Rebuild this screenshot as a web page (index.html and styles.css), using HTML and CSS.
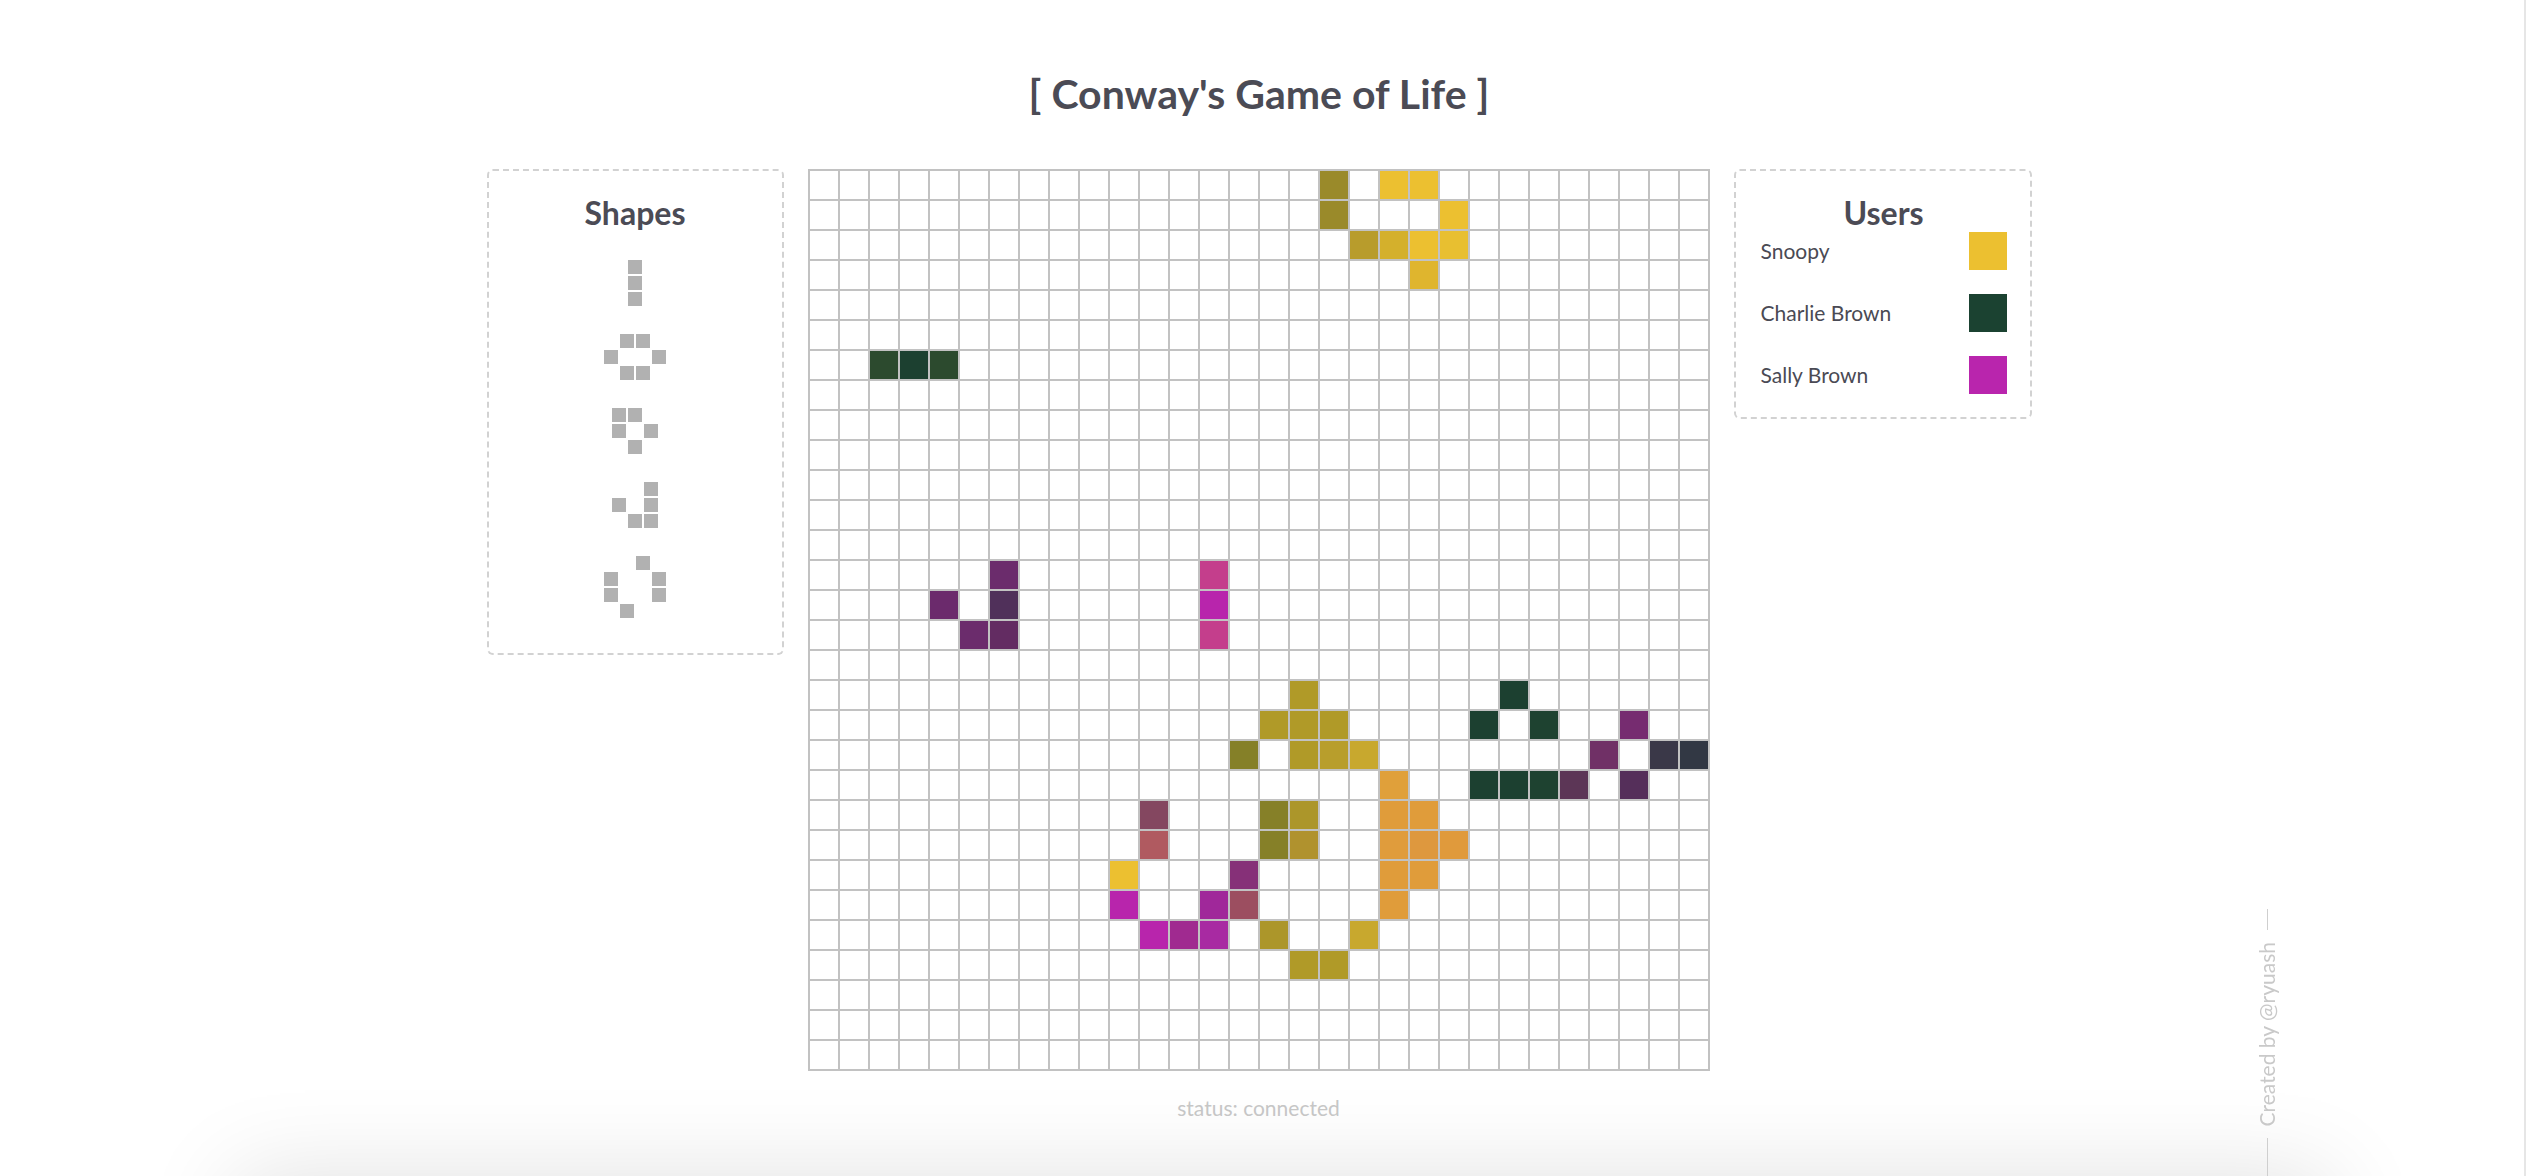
FILE: index.html
```html
<!DOCTYPE html>
<html lang="en">
<head>
<meta charset="utf-8">
<title>Conway's Game of Life</title>
<link rel="stylesheet" href="styles.css">
</head>
<body>
<main class="page">
  <h1 class="title">[ Conway's Game of Life ]</h1>
  <div class="layout">
    <aside class="panel shapes-panel">
      <h2 class="panel-title">Shapes</h2>
      <div class="shape-list">
        <div class="shape shape-1x3">
          <span class="sq" style="--r:1;--c:1"></span>
          <span class="sq" style="--r:2;--c:1"></span>
          <span class="sq" style="--r:3;--c:1"></span>
        </div>
        <div class="shape shape-4x3">
          <span class="sq" style="--r:1;--c:2"></span>
          <span class="sq" style="--r:1;--c:3"></span>
          <span class="sq" style="--r:2;--c:1"></span>
          <span class="sq" style="--r:2;--c:4"></span>
          <span class="sq" style="--r:3;--c:2"></span>
          <span class="sq" style="--r:3;--c:3"></span>
        </div>
        <div class="shape shape-3x3">
          <span class="sq" style="--r:1;--c:1"></span>
          <span class="sq" style="--r:1;--c:2"></span>
          <span class="sq" style="--r:2;--c:1"></span>
          <span class="sq" style="--r:2;--c:3"></span>
          <span class="sq" style="--r:3;--c:2"></span>
        </div>
        <div class="shape shape-3x3">
          <span class="sq" style="--r:1;--c:3"></span>
          <span class="sq" style="--r:2;--c:1"></span>
          <span class="sq" style="--r:2;--c:3"></span>
          <span class="sq" style="--r:3;--c:2"></span>
          <span class="sq" style="--r:3;--c:3"></span>
        </div>
        <div class="shape shape-4x4">
          <span class="sq" style="--r:1;--c:3"></span>
          <span class="sq" style="--r:2;--c:1"></span>
          <span class="sq" style="--r:2;--c:4"></span>
          <span class="sq" style="--r:3;--c:1"></span>
          <span class="sq" style="--r:3;--c:4"></span>
          <span class="sq" style="--r:4;--c:2"></span>
        </div>
      </div>
    </aside>

    <section class="board-wrap">
      <div class="board">
        <span class="cell" style="--r:1;--c:18;--bg:#9a8a2a"></span>
        <span class="cell" style="--r:1;--c:20;--bg:#ecc030"></span>
        <span class="cell" style="--r:1;--c:21;--bg:#ecc030"></span>
        <span class="cell" style="--r:2;--c:18;--bg:#9a8a2a"></span>
        <span class="cell" style="--r:2;--c:22;--bg:#ecc030"></span>
        <span class="cell" style="--r:3;--c:19;--bg:#b89c2c"></span>
        <span class="cell" style="--r:3;--c:20;--bg:#d4b02c"></span>
        <span class="cell" style="--r:3;--c:21;--bg:#ecc030"></span>
        <span class="cell" style="--r:3;--c:22;--bg:#e8bf30"></span>
        <span class="cell" style="--r:4;--c:21;--bg:#dfb52e"></span>

        <span class="cell" style="--r:7;--c:3;--bg:#2c4a2e"></span>
        <span class="cell" style="--r:7;--c:4;--bg:#1c4030"></span>
        <span class="cell" style="--r:7;--c:5;--bg:#2c4a2e"></span>

        <span class="cell" style="--r:14;--c:7;--bg:#6b2c6c"></span>
        <span class="cell" style="--r:14;--c:14;--bg:#c43e8c"></span>
        <span class="cell" style="--r:15;--c:5;--bg:#6b2a6c"></span>
        <span class="cell" style="--r:15;--c:7;--bg:#50305a"></span>
        <span class="cell" style="--r:15;--c:14;--bg:#b825ac"></span>
        <span class="cell" style="--r:16;--c:6;--bg:#6b2c6c"></span>
        <span class="cell" style="--r:16;--c:7;--bg:#632c62"></span>
        <span class="cell" style="--r:16;--c:14;--bg:#c43e8c"></span>

        <span class="cell" style="--r:18;--c:17;--bg:#b09a28"></span>
        <span class="cell" style="--r:18;--c:24;--bg:#1c4030"></span>

        <span class="cell" style="--r:19;--c:16;--bg:#b09a28"></span>
        <span class="cell" style="--r:19;--c:17;--bg:#b09a28"></span>
        <span class="cell" style="--r:19;--c:18;--bg:#b09a28"></span>
        <span class="cell" style="--r:19;--c:23;--bg:#1c4030"></span>
        <span class="cell" style="--r:19;--c:25;--bg:#1e4230"></span>
        <span class="cell" style="--r:19;--c:28;--bg:#762c70"></span>

        <span class="cell" style="--r:20;--c:15;--bg:#858028"></span>
        <span class="cell" style="--r:20;--c:17;--bg:#b09a28"></span>
        <span class="cell" style="--r:20;--c:18;--bg:#b89e2c"></span>
        <span class="cell" style="--r:20;--c:19;--bg:#c8a82e"></span>
        <span class="cell" style="--r:20;--c:27;--bg:#703066"></span>
        <span class="cell" style="--r:20;--c:29;--bg:#3a3848"></span>
        <span class="cell" style="--r:20;--c:30;--bg:#323844"></span>

        <span class="cell" style="--r:21;--c:20;--bg:#e0a03a"></span>
        <span class="cell" style="--r:21;--c:23;--bg:#1c4030"></span>
        <span class="cell" style="--r:21;--c:24;--bg:#1c4030"></span>
        <span class="cell" style="--r:21;--c:25;--bg:#1e4230"></span>
        <span class="cell" style="--r:21;--c:26;--bg:#5c3656"></span>
        <span class="cell" style="--r:21;--c:28;--bg:#552f5a"></span>

        <span class="cell" style="--r:22;--c:12;--bg:#844760"></span>
        <span class="cell" style="--r:22;--c:16;--bg:#868028"></span>
        <span class="cell" style="--r:22;--c:17;--bg:#ac962a"></span>
        <span class="cell" style="--r:22;--c:20;--bg:#e09c3a"></span>
        <span class="cell" style="--r:22;--c:21;--bg:#e09c3a"></span>

        <span class="cell" style="--r:23;--c:12;--bg:#b05a60"></span>
        <span class="cell" style="--r:23;--c:16;--bg:#868028"></span>
        <span class="cell" style="--r:23;--c:17;--bg:#b0922e"></span>
        <span class="cell" style="--r:23;--c:20;--bg:#e09c3c"></span>
        <span class="cell" style="--r:23;--c:21;--bg:#de983e"></span>
        <span class="cell" style="--r:23;--c:22;--bg:#e09a3c"></span>

        <span class="cell" style="--r:24;--c:11;--bg:#ecc030"></span>
        <span class="cell" style="--r:24;--c:15;--bg:#863078"></span>
        <span class="cell" style="--r:24;--c:20;--bg:#e09c3a"></span>
        <span class="cell" style="--r:24;--c:21;--bg:#e09c3a"></span>

        <span class="cell" style="--r:25;--c:11;--bg:#b825ac"></span>
        <span class="cell" style="--r:25;--c:14;--bg:#a0289a"></span>
        <span class="cell" style="--r:25;--c:15;--bg:#9c4e60"></span>
        <span class="cell" style="--r:25;--c:20;--bg:#e09c3a"></span>

        <span class="cell" style="--r:26;--c:12;--bg:#b825ac"></span>
        <span class="cell" style="--r:26;--c:13;--bg:#a02a90"></span>
        <span class="cell" style="--r:26;--c:14;--bg:#a82aa2"></span>
        <span class="cell" style="--r:26;--c:16;--bg:#ac962a"></span>
        <span class="cell" style="--r:26;--c:19;--bg:#c8a82e"></span>

        <span class="cell" style="--r:27;--c:17;--bg:#b09a28"></span>
        <span class="cell" style="--r:27;--c:18;--bg:#b09a28"></span>
      </div>
      <p class="status">status: connected</p>
    </section>

    <aside class="panel users-panel">
      <h2 class="panel-title">Users</h2>
      <ul class="user-list">
        <li class="user"><span class="user-name">Snoopy</span><span class="swatch" style="--bg:#ecc030"></span></li>
        <li class="user"><span class="user-name">Charlie Brown</span><span class="swatch" style="--bg:#1b4231"></span></li>
        <li class="user"><span class="user-name">Sally Brown</span><span class="swatch" style="--bg:#b925ad"></span></li>
      </ul>
    </aside>
  </div>
</main>

<div class="credit">
  <span class="credit-line credit-line-short"></span>
  <span class="credit-text">Created by @ryuash</span>
  <span class="credit-line credit-line-long"></span>
</div>

<div class="footer-shadow"></div>
</body>
</html>
```

FILE: styles.css
```css
* { box-sizing: border-box; }

html, body {
  margin: 0;
  padding: 0;
  background: #ffffff;
}

body {
  font-family: "Lato", "Noto Sans", "Liberation Sans", sans-serif;
  font-size: 21px;
  color: #4a4a54;
  border-right: 2px solid #e6e6e6;
  overflow-x: hidden;
}

.page {
  min-height: 1176px;
  padding-right: 6px;
}

.title {
  margin: 0 0 51px;
  padding-top: 70px;
  text-align: center;
  font-size: 41px;
  line-height: 48px;
  font-weight: 700;
  color: #4b4b55;
}

.layout {
  display: flex;
  justify-content: center;
  align-items: flex-start;
  gap: 24px;
}

.panel {
  border: 2px dashed #d2d2d2;
  border-radius: 6px;
}

.panel-title {
  margin: 0;
  text-align: center;
  font-size: 32px;
  line-height: 36px;
  font-weight: 700;
  color: #4b4b55;
}

/* Shapes panel */
.shapes-panel {
  width: 297px;
  padding: 24px 20px 35px;
}

.shapes-panel .panel-title {
  margin-bottom: 29px;
}

.shape-list {
  display: flex;
  flex-direction: column;
  align-items: center;
  gap: 28px;
}

.shape {
  display: grid;
  grid-auto-columns: 14px;
  grid-auto-rows: 14px;
  gap: 2px;
}

.shape-1x3 { grid-template-columns: repeat(1, 14px); grid-template-rows: repeat(3, 14px); }
.shape-3x3 { grid-template-columns: repeat(3, 14px); grid-template-rows: repeat(3, 14px); }
.shape-4x3 { grid-template-columns: repeat(4, 14px); grid-template-rows: repeat(3, 14px); }
.shape-4x4 { grid-template-columns: repeat(4, 14px); grid-template-rows: repeat(4, 14px); }

.sq {
  grid-row: var(--r);
  grid-column: var(--c);
  background: #b1b1b1;
}

/* Board */
.board-wrap {
  display: flex;
  flex-direction: column;
  align-items: center;
}

.board {
  display: grid;
  grid-template-columns: repeat(30, 28px);
  grid-template-rows: repeat(30, 28px);
  gap: 2px;
  padding: 2px;
  width: 902px;
  height: 902px;
  background-color: #ffffff;
  background-image:
    linear-gradient(90deg, #c2c2c2 2px, transparent 2px),
    linear-gradient(180deg, #c2c2c2 2px, transparent 2px);
  background-size: 30px 30px, 30px 30px;
  background-position: 0 0, 0 0;
}

.cell {
  grid-row: var(--r);
  grid-column: var(--c);
  background: var(--bg);
}

.status {
  margin: 25px 0 0;
  font-size: 21px;
  line-height: 24px;
  color: #c6c6c6;
}

/* Users panel */
.users-panel {
  width: 298px;
  padding: 24px 23px 23px 25px;
}

.user-list {
  list-style: none;
  margin: 1px 0 0;
  padding: 0;
  display: flex;
  flex-direction: column;
  gap: 24px;
}

.user {
  display: flex;
  align-items: center;
  justify-content: space-between;
  height: 38px;
}

.user-name {
  font-size: 21px;
  line-height: 24px;
  color: #4a4a54;
}

.swatch {
  width: 38px;
  height: 38px;
  background: var(--bg);
}

/* Credit */
.credit {
  position: fixed;
  right: 247px;
  bottom: 0;
  display: flex;
  flex-direction: column;
  align-items: center;
  gap: 12px;
}

.credit-line {
  display: block;
  width: 1px;
  background: #cfcfcf;
}

.credit-line-short { height: 21px; }
.credit-line-long { height: 38px; }

.credit-text {
  writing-mode: vertical-rl;
  transform: rotate(180deg);
  font-size: 21px;
  line-height: 24px;
  color: #c9c9c9;
  white-space: nowrap;
}

/* Soft shadow of the section below the fold */
.footer-shadow {
  margin-left: 235px;
  width: 2095px;
  height: 300px;
  background: #ffffff;
  box-shadow: 0 0 90px rgba(0, 0, 0, 0.12);
}
```
